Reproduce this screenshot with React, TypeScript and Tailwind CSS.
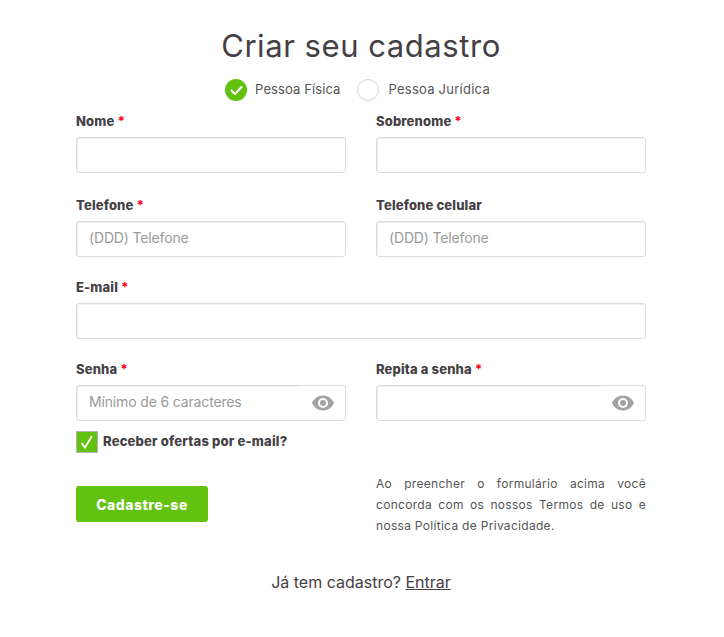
import React from "react";

function Label({ text, req }: { text: string; req?: boolean }) {
  return (
    <div className="h-[20px] text-[13px] leading-[20px] font-extrabold tracking-[0.15px] text-[#444044]">
      {text}
      {req && <span className="text-[#ff0022]"> *</span>}
    </div>
  );
}

function Eye() {
  return (
    <svg width="22" height="16" viewBox="0 0 22 16" className="mr-[11px] mb-[1px] ml-auto shrink-0">
      <path fillRule="evenodd" fill="#a3a3a3" d="M11 0.5C6 0.5 1.9 3.6 0 8c1.9 4.4 6 7.5 11 7.5S20.100 12.400 22 8C20.100 3.600 16 .5 11 .5zM11 13a5 5 0 1 1 0-10 5 5 0 0 1 0 10zM11 5a3 3 0 1 0 0 6 3 3 0 0 0 0-6z" />
    </svg>
  );
}

function Field({ label, req, ph, eye }: { label: string; req?: boolean; ph?: string; eye?: boolean }) {
  return (
    <div>
      <Label text={label} req={req} />
      <div className="mt-[6px] flex h-[36px] items-center rounded-[3px] border border-[#dcdcdc] bg-white">
        <div className={`${eye ? "w-[225px]" : "flex-1"} h-full rounded-[2px] pl-[12px] text-[14px] leading-[32px] tracking-[-0.15px] text-[#9a9a9a] shadow-[inset_1px_1px_0_#eeeeee]`}>
          {ph}
        </div>
        {eye && <Eye />}
      </div>
    </div>
  );
}

export default function App() {
  return (
    <div className="h-[637px] w-[724px] bg-white font-['Inter',sans-serif] text-[#444044]">
      <div className="ml-[76px] w-[570px] pt-[25px]">
        <h1 className="text-center text-[31px] leading-[42px] font-normal tracking-[0.55px]">Criar seu cadastro</h1>
        <div className="mt-[11px] flex h-[24px] items-center justify-center pr-[7px] text-[13px] tracking-[0.1px] text-[#555]">
          <div className="flex h-[22px] w-[22px] items-center justify-center rounded-full bg-[#62c20f]">
            <svg width="13" height="11" viewBox="0 0 13 11" fill="none">
              <path d="M1.500 5.500 5 9l6.500-7" stroke="#fff" strokeWidth="2" strokeLinecap="round" strokeLinejoin="round" />
            </svg>
          </div>
          <span className="mb-[1px] ml-[8px]">Pessoa Física</span>
          <div className="ml-[17px] h-[22px] w-[22px] rounded-full border border-[#d4d4d0]" />
          <span className="mb-[1px] ml-[9px] tracking-[0.25px]">Pessoa Jurídica</span>
        </div>
        <div className="mt-[9px] grid grid-cols-2 gap-x-[30px]">
          <Field label="Nome" req />
          <Field label="Sobrenome" req />
        </div>
        <div className="mt-[22px] grid grid-cols-2 gap-x-[30px]">
          <Field label="Telefone" req ph="(DDD) Telefone" />
          <Field label="Telefone celular" ph="(DDD) Telefone" />
        </div>
        <div className="mt-[20px]">
          <Field label="E-mail" req />
        </div>
        <div className="mt-[20px] grid grid-cols-2 gap-x-[30px]">
          <Field label="Senha" req ph="Mínimo de 6 caracteres" eye />
          <Field label="Repita a senha" req eye />
        </div>
        <div className="mt-[10px] flex h-[22px] items-center">
          <div className="flex h-[22px] w-[22px] items-center justify-center border border-[#b4b4b4] bg-[#62c20f]">
            <svg width="14" height="14" viewBox="0 0 14 14" fill="none">
              <path d="M1.500 8 5 12.500 12 1" stroke="#fff" strokeWidth="1.800" />
            </svg>
          </div>
          <span className="ml-[5px] text-[13px] font-extrabold tracking-[0.2px]">Receber ofertas por e-mail?</span>
        </div>
        <div className="mt-[20px] grid grid-cols-2 gap-x-[30px]">
          <div>
            <div className="mt-[13px] flex h-[36px] w-[132px] items-center justify-center rounded-[3px] bg-[#62c20f] text-[14px] font-extrabold tracking-[0.5px] text-white">
              Cadastre-se
            </div>
          </div>
          <p className="text-justify text-[12px] leading-[21px] tracking-[0.3px] text-[#555]">
            Ao preencher o formulário acima você concorda com os nossos Termos de uso e nossa Política de Privacidade.
          </p>
        </div>
        <div className="mt-[34px] text-center text-[16px] leading-[24px]">
          Já tem cadastro? <span className="underline">Entrar</span>
        </div>
      </div>
    </div>
  );
}
